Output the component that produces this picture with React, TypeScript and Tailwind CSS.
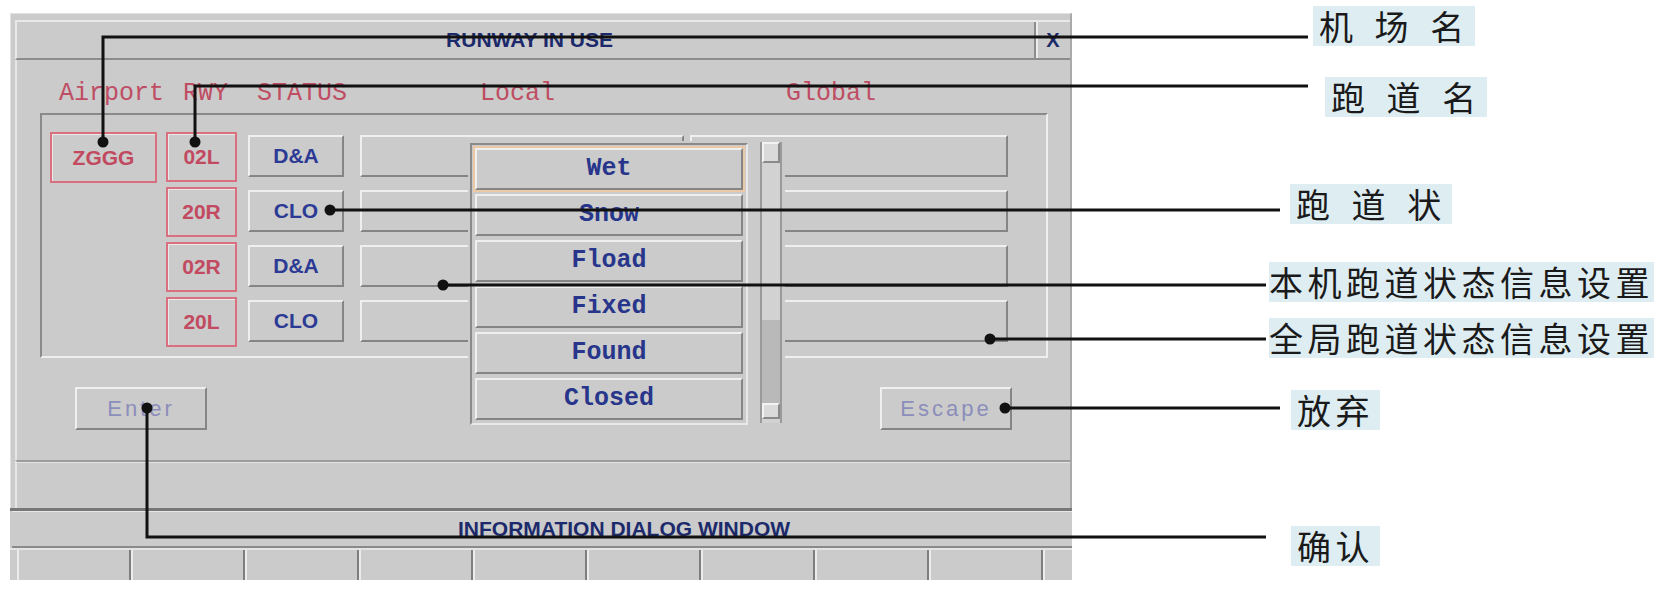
import React from "react";

const raised =
  "border-2 border-t-[#efefef] border-l-[#efefef] border-b-[#858585] border-r-[#858585] bg-[#cbcbcb]";
const sunken =
  "border-2 border-t-[#8a8a8a] border-l-[#8a8a8a] border-b-[#efefef] border-r-[#efefef]";

const rows = [
  { ap: "ZGGG", rwy: "02L", st: "D&A" },
  { ap: "", rwy: "20R", st: "CLO" },
  { ap: "", rwy: "02R", st: "D&A" },
  { ap: "", rwy: "20L", st: "CLO" },
];

const items = ["Wet", "Snow", "Fload", "Fixed", "Found", "Closed"];

function Popup() {
  return (
    <div className="absolute left-[426px] top-[26px] w-[317px] h-[284px] bg-[#cbcbcb] flex items-start z-10">
      <div className="ml-[2px] mt-[2px] w-[278px] h-[282px] border-2 border-t-[#8a8a8a] border-l-[#8a8a8a] border-b-[#e8e8e8] border-r-[#e8e8e8] p-[3px] flex flex-col gap-[4px]">
        {items.map((it, i) => (
          <div
            key={it}
            className={
              "h-[42px] shrink-0 flex items-center justify-center font-['Liberation_Mono',monospace] font-bold text-[25px] text-[#27358a] " +
              raised +
              (i === 0 ? " ring-2 ring-[#ebc9a6]" : "")
            }
          >
            {it}
          </div>
        ))}
      </div>
      <div className="ml-[12px] mt-[1px] w-[22px] h-[281px] flex flex-col border-l-2 border-r-2 border-[#9a9a9a] bg-[#d2d2d2]">
        <div className="h-[21px] shrink-0 border-2 border-t-[#f2f2f2] border-l-[#f2f2f2] border-b-[#8a8a8a] border-r-[#8a8a8a] bg-[#dadada]" />
        <div className="h-[157px] shrink-0" />
        <div className="h-[83px] shrink-0 bg-[#b9b9b9]" />
        <div className="h-[16px] shrink-0 border-2 border-t-[#f2f2f2] border-l-[#f2f2f2] border-b-[#8a8a8a] border-r-[#8a8a8a] bg-[#dadada]" />
      </div>
    </div>
  );
}

function Dialog() {
  return (
    <div className="h-[495px] bg-[#cbcbcb] border-t border-l border-[#e2e2e2] border-r-2 border-r-[#a9a9a9] flex flex-col">
      {/* title bar */}
      <div className="mt-[6px] ml-[4px] h-[40px] shrink-0 flex border-t-2 border-l-2 border-t-[#e8e8e8] border-l-[#e8e8e8] border-b-2 border-b-[#8c8c8c]">
        <div className="flex-1 flex items-center justify-center pl-[8px] font-['Liberation_Sans',sans-serif] font-bold text-[21px] text-[#1c2a6b]">
          RUNWAY IN USE
        </div>
        <div className="w-[36px] flex items-center justify-center border-l-2 border-l-[#8c8c8c] shadow-[inset_2px_0_0_#ececec] font-['Liberation_Sans',sans-serif] font-bold text-[20px] text-[#1c2a6b]">
          X
        </div>
      </div>
      {/* body */}
      <div className="h-[400px] shrink-0 ml-[4px] border-l-2 border-l-[#e6e6e6] flex flex-col">
        <div className="mt-[21px] h-[26px] flex items-center font-['Liberation_Mono',monospace] text-[25px] leading-[26px] text-[#bf4d63]">
          <span className="ml-[42px]">Airport</span>
          <span className="ml-[19px]">RWY</span>
          <span className="ml-[29px]">STATUS</span>
          <span className="ml-[133px]">Local</span>
          <span className="ml-[231px]">Global</span>
        </div>
        <div className={"relative mt-[6px] ml-[23px] w-[1008px] h-[245px] shrink-0 " + sunken}>
          <div className="pt-[17px] pl-[8px] flex flex-col gap-[4px]">
            {rows.map((r, i) => (
              <div key={i} className="h-[51px] flex items-start">
                <div className="w-[107px] shrink-0">
                  {r.ap && (
                    <div className="h-[51px] border-2 border-[#d9707f] shadow-[inset_1px_1px_0_#e9e9e9] flex items-center justify-center font-['Liberation_Sans',sans-serif] font-bold text-[21px] text-[#c24a60]">
                      {r.ap}
                    </div>
                  )}
                </div>
                <div className="ml-[9px] w-[71px] h-[50px] shrink-0 border-2 border-[#d9707f] shadow-[inset_1px_1px_0_#e9e9e9] flex items-center justify-center font-['Liberation_Sans',sans-serif] font-bold text-[21px] text-[#c24a60]">
                  {r.rwy}
                </div>
                <div
                  className={
                    "ml-[11px] mt-[3px] w-[96px] h-[42px] shrink-0 flex items-center justify-center font-['Liberation_Sans',sans-serif] font-bold text-[21px] text-[#2b3a94] " +
                    raised
                  }
                >
                  {r.st}
                </div>
                <div className={"ml-[16px] mt-[3px] w-[324px] h-[42px] shrink-0 " + raised} />
                <div className={"ml-[6px] mt-[3px] w-[318px] h-[42px] shrink-0 " + raised} />
              </div>
            ))}
          </div>
          <Popup />
        </div>
        <div className="mt-[29px] h-[43px] flex font-['Liberation_Sans',sans-serif] text-[22px] tracking-[3px] text-[#8b8eba]">
          <div className={"ml-[58px] w-[132px] h-[43px] flex items-center justify-center " + raised}>Enter</div>
          <div className={"ml-[673px] w-[132px] h-[43px] flex items-center justify-center " + raised}>Escape</div>
        </div>
      </div>
      {/* footer */}
      <div className="flex-1 ml-[4px] border-t-2 border-t-[#9c9c9c] border-l-2 border-l-[#e6e6e6] shadow-[inset_0_1px_0_#e4e4e4]" />
    </div>
  );
}

function InfoWindow() {
  return (
    <div className="h-[72px] bg-[#cbcbcb] border-t-[3px] border-t-[#777777] flex flex-col">
      <div className="h-[37px] shrink-0 ml-[2px] flex items-center pl-[446px] border-b-2 border-b-[#8a8a8a] shadow-[inset_0_1px_0_#e6e6e6] font-['Liberation_Sans',sans-serif] font-bold text-[21px] text-[#1c2a6b]">
        INFORMATION DIALOG WINDOW
      </div>
      <div className="flex-1 flex overflow-hidden pl-[7px] border-t-2 border-t-[#e4e4e4]">
        {Array.from({ length: 10 }).map((_, i) => (
          <div
            key={i}
            className="w-[114px] shrink-0 border-l-2 border-l-[#ececec] border-r-2 border-r-[#7e7e7e]"
          />
        ))}
      </div>
    </div>
  );
}

const label =
  "h-[40px] flex items-center self-start bg-[#deedf2] font-['Noto_Sans_CJK_SC',sans-serif] text-[34px] leading-[40px] tracking-[4.5px] text-[#1a1a1a] whitespace-pre";

export default function App() {
  return (
    <div className="relative w-[1654px] h-[592px] bg-white overflow-hidden flex items-start font-['Liberation_Sans',sans-serif]">
      <div className="ml-[10px] mt-[13px] w-[1062px] shrink-0 flex flex-col">
        <Dialog />
        <InfoWindow />
      </div>
      <div className="ml-[197px] w-[385px] shrink-0 flex flex-col">
        <div className={"mt-[6px] ml-[44px] px-[6px] [word-spacing:5px] " + label}>机 场 名</div>
        <div className={"mt-[31px] ml-[56px] px-[6px] [word-spacing:5px] " + label}>跑 道 名</div>
        <div className={"mt-[67px] ml-[21px] px-[6px] [word-spacing:5px] " + label}>跑 道 状</div>
        <div className={"mt-[38px] " + label}>本机跑道状态信息设置</div>
        <div className={"mt-[16px] " + label}>全局跑道状态信息设置</div>
        <div className={"mt-[32px] ml-[22px] px-[6px] " + label}>放弃</div>
        <div className={"mt-[96px] ml-[22px] px-[6px] " + label}>确认</div>
      </div>
      <svg
        className="absolute left-0 top-0 z-20 pointer-events-none"
        width={1654}
        height={592}
        viewBox="0 0 1654 592"
      >
        <g fill="none" stroke="#111111" strokeWidth={3}>
          <path d="M103 142 V37 H1308" />
          <path d="M195 142 V86 H1308" />
          <path d="M330 210 H1280" />
          <path d="M443 285 H1266" />
          <path d="M990 339 H1266" />
          <path d="M1005 408 H1280" />
          <path d="M147 408 V537 H1266" />
        </g>
        <g fill="#111111">
          <circle cx={103} cy={142} r={5.5} />
          <circle cx={195} cy={142} r={5.5} />
          <circle cx={330} cy={210} r={5.5} />
          <circle cx={443} cy={285} r={5.5} />
          <circle cx={990} cy={339} r={5.5} />
          <circle cx={1005} cy={408} r={5.5} />
          <circle cx={147} cy={408} r={5.5} />
        </g>
      </svg>
    </div>
  );
}
